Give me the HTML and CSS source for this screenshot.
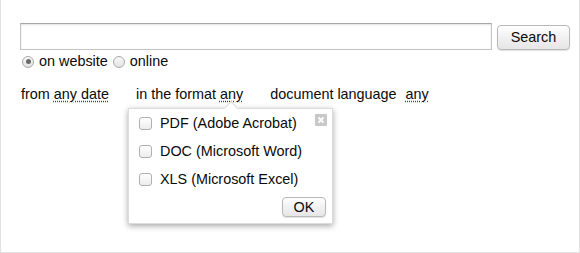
FILE: index.html
```html
<!DOCTYPE html>
<html lang="en">
<head>
    <meta charset="UTF-8">
    <meta name="viewport" content="width=device-width, initial-scale=1.0">
    <title>Search</title>
    <link rel="stylesheet" href="styles.css">
</head>
<body>

<div class="page">
    <form class="search-row">
        <input type="text" class="search-input">
        <button type="button" class="btn btn-search">Search</button>
    </form>

    <div class="scope">
        <label class="option"><span class="radio checked"></span>on website</label>
        <label class="option"><span class="radio"></span>online</label>
    </div>

    <div class="filters">
        <span class="filter">from <a class="pick">any date</a></span>
        <span class="filter filter-format">in the format <a class="pick">any</a>
            <div class="popup">
                <span class="popup-close">
                    <svg width="12" height="12" viewBox="0 0 12 12">
                        <rect width="12" height="12" rx="1" fill="#c8c8c8"/>
                        <path d="M3.5 3.5 L8.5 8.5 M8.5 3.5 L3.5 8.5" stroke="#fff" stroke-width="2"/>
                    </svg>
                </span>
                <label class="check-row"><span class="checkbox"></span>PDF (Adobe Acrobat)</label>
                <label class="check-row"><span class="checkbox"></span>DOC (Microsoft Word)</label>
                <label class="check-row"><span class="checkbox"></span>XLS (Microsoft Excel)</label>
                <div class="popup-foot">
                    <button type="button" class="btn btn-ok">OK</button>
                </div>
            </div>
        </span>
        <span class="filter">document language <a class="pick pick-lang">any</a></span>
    </div>
</div>

</body>
</html>
```

FILE: styles.css
```css
body {
    margin: 0;
    font-family: "Liberation Sans", Arial, sans-serif;
    font-size: 14.4px;
    color: #0a0a0a;
    background-color: #fff;
}
.page {
    width: 580px;
    height: 253px;
    box-sizing: border-box;
    border: 1px solid #e2e2e2;
    border-top: none;
    padding: 23px 0 0 19px;
}
.search-row {
    display: flex;
    align-items: flex-end;
    gap: 5px;
    margin: 0;
}
.search-input {
    width: 472px;
    height: 27px;
    box-sizing: border-box;
    margin: 0;
    border: 1px solid #c4c4c4;
    border-top-color: #a8a8a8;
    box-shadow: inset 0 1px 2px rgba(0,0,0,0.12);
    outline: none;
}
.btn {
    font-family: "Liberation Sans", Arial, sans-serif;
    font-size: 14.4px;
    color: #0a0a0a;
    background: linear-gradient(#ffffff, #f1f1f1 50%, #e6e6e6);
    border: 1px solid #b8b8b8;
    border-radius: 4px;
    box-shadow: 0 1px 1px rgba(0,0,0,0.12);
    padding: 0;
    margin: 0;
    cursor: pointer;
}
.btn-search {
    width: 73px;
    height: 25px;
    padding-bottom: 2px;
}
.scope {
    display: flex;
    align-items: center;
    margin-top: 3px;
    line-height: 17px;
}
.option {
    display: flex;
    align-items: center;
    margin-right: 3px;
}
.radio {
    width: 12px;
    height: 12px;
    box-sizing: border-box;
    border: 1px solid #a9a9a9;
    border-radius: 50%;
    background: linear-gradient(#fafafa, #e2e2e2);
    margin: 0 5px 0 2px;
    position: relative;
}
.radio.checked::after {
    content: "";
    position: absolute;
    left: 2.5px;
    top: 2.5px;
    width: 5px;
    height: 5px;
    border-radius: 50%;
    background-color: #6a6a6a;
}
.filters {
    margin-top: 16px;
    line-height: 17px;
    white-space: nowrap;
    display: flex;
}
.filter {
    margin-left: 1px;
    margin-right: 26px;
}
.filter:last-child {
    margin-right: 0;
}
.pick {
    text-decoration: underline dotted #444;
    text-underline-offset: 2px;
}
.pick-lang {
    margin-left: 5px;
}
.filter-format {
    position: relative;
}
.popup {
    position: absolute;
    left: -8px;
    top: 22px;
    width: 205px;
    height: 116px;
    box-sizing: border-box;
    padding: 0 6px 0 10px;
    background-color: #fff;
    border: 1px solid #dcdcdc;
    box-shadow: 0 2px 6px rgba(0,0,0,0.35);
    line-height: 28px;
}
.popup::before {
    content: "";
    position: absolute;
    left: 97px;
    top: -6px;
    width: 9px;
    height: 9px;
    background-color: #fff;
    border-top: 1px solid #dcdcdc;
    border-left: 1px solid #dcdcdc;
    transform: rotate(45deg);
}
.popup-close {
    position: absolute;
    top: 5px;
    right: 5px;
    line-height: 0;
}
.check-row {
    display: flex;
    align-items: center;
    height: 28px;
}
.checkbox {
    width: 13px;
    height: 13px;
    box-sizing: border-box;
    border: 1px solid #b0b0b0;
    border-radius: 3px;
    background: linear-gradient(#ffffff, #ececec);
    margin-right: 8px;
}
.popup-foot {
    display: flex;
    justify-content: flex-end;
    margin-top: 4px;
}
.btn-ok {
    width: 44px;
    height: 20px;
}
```
